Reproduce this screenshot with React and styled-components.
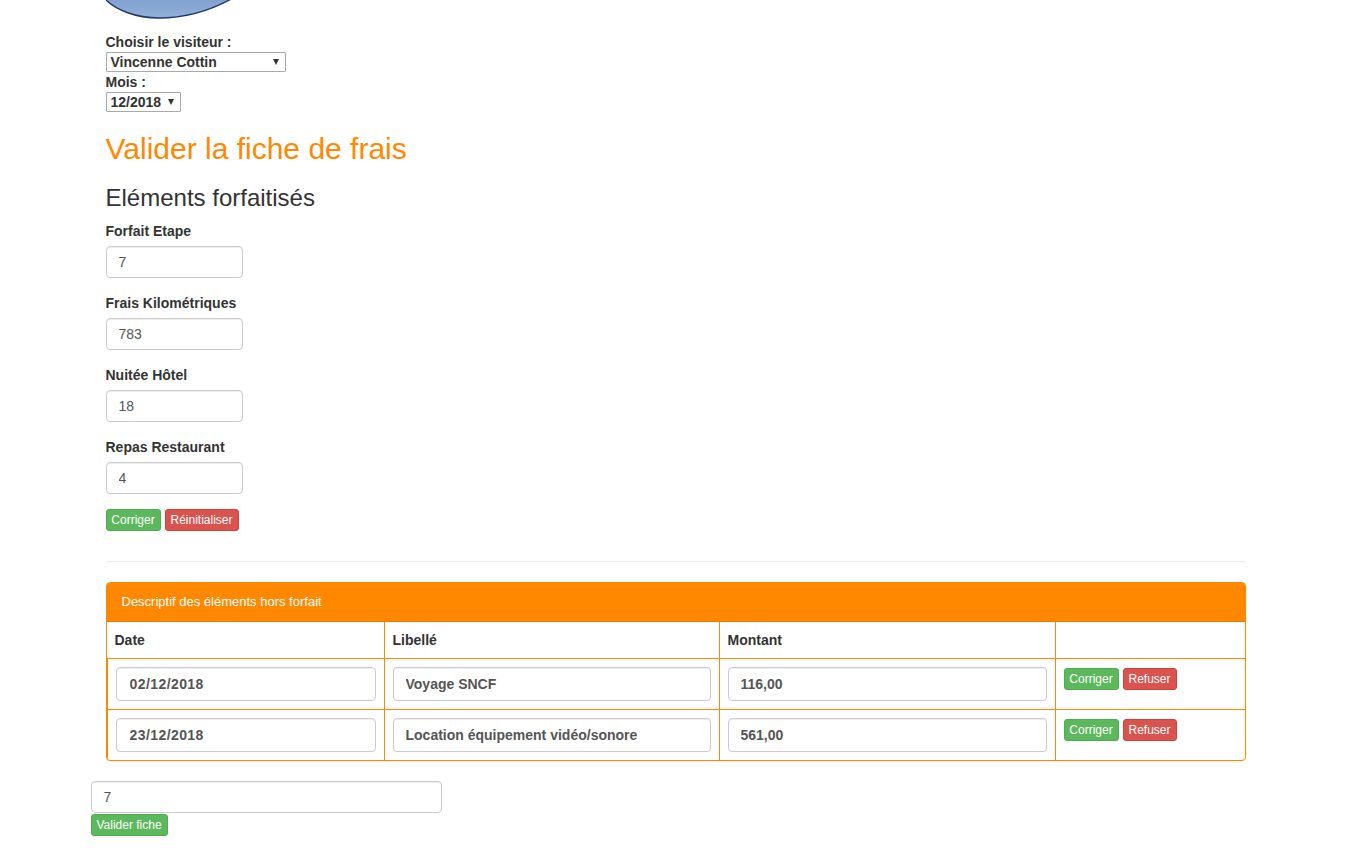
import React from "react";
import styled, { createGlobalStyle } from "styled-components";

const GlobalStyle = createGlobalStyle`
  *, *::before, *::after { box-sizing: border-box; }
  body {
    margin: 0;
    background: #fff;
    color: #333;
    font: 14px/20px "Liberation Sans", Arial, sans-serif;
    overflow: hidden;
  }
`;

const Page = styled.main`
  width: 1170px;
  margin-left: 90.5px;
`;

const Content = styled.div`
  padding: 0 15px;
`;

const Logo = styled.svg`
  display: block;
  width: 140px;
  height: 20px;
  margin-bottom: 12px;
`;

const Label = styled.label`
  display: block;
  font-weight: 700;
  white-space: nowrap;
`;

const Select = styled.div`
  display: flex;
  align-items: center;
  justify-content: space-between;
  width: ${(p) => p.$width}px;
  height: 20px;
  padding: 0 6px 0 4px;
  border: 1px solid #a9a9a9;
  border-radius: 1px;
  font-weight: 700;
  line-height: 18px;
`;

const Arrow = styled.svg`
  width: 6px;
  height: 6px;
  fill: #333;
`;

const Title = styled.h2`
  margin: 20px 0;
  color: #ff8800;
  font-size: 30px;
  font-weight: 400;
  line-height: 33px;
`;

const Subtitle = styled.h3`
  margin: 0 0 10px;
  font-size: 24px;
  font-weight: 400;
  line-height: 26px;
`;

const Field = styled.div`
  margin-bottom: 15px;
`;

const Input = styled.input`
  display: block;
  width: ${(p) => p.$width || "100%"};
  height: ${(p) => p.$height || 32}px;
  margin: 0;
  padding: 0 12px;
  border: 1px solid #ccc;
  border-radius: 4px;
  background: #fff;
  box-shadow: inset 0 1px 1px rgba(0, 0, 0, 0.075);
  color: #555;
  font: ${(p) => (p.$bold ? 700 : 400)} 14px/20px "Liberation Sans", Arial, sans-serif;
  letter-spacing: ${(p) => p.$spacing || 0}px;
  outline: none;
`;

const FieldInput = styled(Input)`
  margin-top: 5px;
`;

const DateInput = styled(Input)`
  padding-left: 13px;
`;

const Actions = styled.div`
  display: flex;
  gap: 4px;
`;

const Button = styled.button`
  width: ${(p) => p.$width}px;
  height: 22px;
  padding: 0;
  border: 1px solid ${(p) => (p.$danger ? "#d43f3a" : "#4cae4c")};
  border-radius: 3px;
  background: ${(p) => (p.$danger ? "#d9534f" : "#5cb85c")};
  color: #fff;
  font: 12px/18px "Liberation Sans", Arial, sans-serif;
  white-space: nowrap;
`;

const FooterButton = styled(Button)`
  display: block;
  margin-top: 1px;
`;

const Divider = styled.hr`
  height: 1px;
  margin: 30px 0 20px;
  border: 0;
  background: #eee;
`;

const Panel = styled.section`
  margin-bottom: 20px;
  border: 1px solid #ff8800;
  border-radius: 4px;
  overflow: hidden;
  box-shadow: 0 1px 1px rgba(0, 0, 0, 0.05);
`;

const PanelHeading = styled.header`
  height: 39px;
  padding: 9px 15px;
  border-bottom: 1px solid #e67a00;
  background: #ff8800;
  color: #fff;
  font-size: 13px;
`;

const Row = styled.div`
  display: grid;
  grid-template-columns: 278px 335px 336px 189px;
`;

const HeadCell = styled.div`
  height: 36px;
  padding: 8px;
  border-right: 1px solid #ff8800;
  font-weight: 700;
  &:last-child { border-right: 0; }
`;

const Cell = styled.div`
  height: 51px;
  padding: 8px;
  border-top: 1px solid #ff8800;
  border-right: 1px solid #ff8800;
  &:first-child { border-left: 1px solid #ff8800; }
  &:last-child { border-right: 0; padding-top: 9px; }
`;

const fields = [
  { label: "Forfait Etape", value: "7" },
  { label: "Frais Kilométriques", value: "783" },
  { label: "Nuitée Hôtel", value: "18" },
  { label: "Repas Restaurant", value: "4" },
];

const expenses = [
  { date: "02/12/2018", label: "Voyage SNCF", amount: "116,00" },
  { date: "23/12/2018", label: "Location équipement vidéo/sonore", amount: "561,00" },
];

function DownArrow() {
  return (
    <Arrow viewBox="0 0 6 6" aria-hidden="true">
      <path d="M0 0H6L3 6Z" />
    </Arrow>
  );
}

export default function App() {
  return (
    <>
      <GlobalStyle />
      <Page>
        <Content>
          <Logo viewBox="0 0 140 20" aria-hidden="true">
            <defs>
              <linearGradient id="logoFill" x1="0" y1="0" x2="0" y2="1">
                <stop offset="0" stopColor="#7fa0cd" />
                <stop offset="1" stopColor="#92b0da" />
              </linearGradient>
            </defs>
            <path
              d="M-2 -2C9 10 30 18 53 18C78 18 105 10.5 128 -2.5"
              fill="url(#logoFill)"
              stroke="#1d3a63"
              strokeWidth="1.4"
            />
          </Logo>
          <Label>Choisir le visiteur :</Label>
          <Select $width={180}>
            Vincenne Cottin
            <DownArrow />
          </Select>
          <Label>Mois :</Label>
          <Select $width={75}>
            12/2018
            <DownArrow />
          </Select>
          <Title>Valider la fiche de frais</Title>
          <Subtitle>Eléments forfaitisés</Subtitle>
          {fields.map((f) => (
            <Field key={f.label}>
              <Label>{f.label}</Label>
              <FieldInput $width="137px" defaultValue={f.value} />
            </Field>
          ))}
          <Actions>
            <Button $width={55}>Corriger</Button>
            <Button $width={74} $danger>Réinitialiser</Button>
          </Actions>
          <Divider />
          <Panel>
            <PanelHeading>Descriptif des éléments hors forfait</PanelHeading>
            <Row>
              <HeadCell>Date</HeadCell>
              <HeadCell>Libellé</HeadCell>
              <HeadCell>Montant</HeadCell>
              <HeadCell />
            </Row>
            {expenses.map((e) => (
              <Row key={e.date}>
                <Cell><DateInput $height={34} $bold $spacing={0.42} defaultValue={e.date} /></Cell>
                <Cell><Input $height={34} $bold defaultValue={e.label} /></Cell>
                <Cell><Input $height={34} $bold defaultValue={e.amount} /></Cell>
                <Cell>
                  <Actions>
                    <Button $width={55}>Corriger</Button>
                    <Button $width={54} $danger>Refuser</Button>
                  </Actions>
                </Cell>
              </Row>
            ))}
          </Panel>
        </Content>
        <Input $width="351px" defaultValue="7" />
        <FooterButton $width={77}>Valider fiche</FooterButton>
      </Page>
    </>
  );
}
